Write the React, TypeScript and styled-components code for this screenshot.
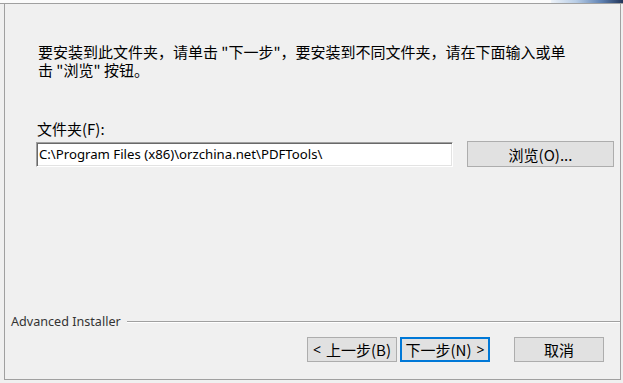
import React from "react";
import styled, { createGlobalStyle } from "styled-components";

const Global = createGlobalStyle`
  html, body { margin: 0; padding: 0; background: #f0f0f0; }
  body { font-family: "Noto Sans CJK SC", sans-serif; }
`;

const CJK = `"Noto Sans CJK SC", "Noto Sans", sans-serif`;
const LATIN = `"Noto Sans", "Noto Sans CJK SC", sans-serif`;

const Window = styled.div`
  width: 623px;
  height: 383px;
  display: flex;
  flex-direction: column;
  background: #f0f0f0;
  color: #000;
  font-family: ${CJK};
  font-size: 15px;
  overflow: hidden;
`;

const Banner = styled.div`
  height: 3px;
  flex: none;
  display: flex;
  justify-content: flex-end;
  background: #fbfbfb;
  border-bottom: 1px solid #a0a0a0;
`;

const BannerArt = styled.div`
  width: 72px;
  height: 3px;
  background: linear-gradient(to right, #eef3f9, #b8cde6 35%, #5f82b3 70%, #223458);
`;

const Body = styled.div`
  flex: 1;
  display: flex;
  flex-direction: column;
  margin: 0 2px 3px 4px;
  border: 1px solid #a0a0a0;
  border-top: none;
`;

const Intro = styled.p`
  margin: 39px 0 0 33px;
  line-height: 18px;
  font-size: 15px;
  white-space: nowrap;
`;

const FieldLabel = styled.div`
  margin: 41px 0 0 32px;
  line-height: 18px;
  font-size: 15px;
`;

const FieldRow = styled.div`
  display: flex;
  align-items: center;
  margin: 3px 0 0 31px;
  gap: 14px;
`;

const PathBox = styled.div`
  width: 413px;
  height: 23px;
  display: flex;
  align-items: center;
  padding-left: 2px;
  background: #fff;
  border: 1px solid;
  border-color: #a0a0a0 #fff #fff #a0a0a0;
  box-shadow: inset 1px 1px 0 #696969, inset -1px -1px 0 #e3e3e3;
  white-space: nowrap;
  font-family: ${LATIN};
  font-size: 13.2px;
`;

const Button = styled.button<{ $w: number; $h?: number; $primary?: boolean }>`
  box-sizing: border-box;
  width: ${(p) => p.$w}px;
  height: ${(p) => p.$h ?? 25}px;
  padding: 0;
  margin: 0;
  background: #e1e1e1;
  border: ${(p) => (p.$primary ? "2px solid #0078d7" : "1px solid #adadad")};
  font-family: ${CJK};
  font-size: 15px;
  color: #000;
  display: flex;
  align-items: center;
  justify-content: center;
  line-height: 1;
  white-space: nowrap;
`;

const Arrow = styled.span<{ $side: "left" | "right" }>`
  font-family: ${LATIN};
  font-size: 14px;
  margin-${(p) => (p.$side === "left" ? "right" : "left")}: 5px;
`;

const Spacer = styled.div`
  flex: 1;
`;

const BrandRow = styled.div`
  display: flex;
  align-items: center;
  gap: 6px;
  padding-left: 6px;
`;

const Brand = styled.span`
  color: #333;
  font-family: ${LATIN};
  font-size: 12.6px;
`;

const Rule = styled.div`
  flex: 1;
  height: 0;
  border-top: 1px solid #a0a0a0;
  border-bottom: 1px solid #ffffff;
`;

const ButtonRow = styled.div`
  display: flex;
  align-items: center;
  margin: 7px 0 17px 302px;
`;

const NavGroup = styled.div`
  display: flex;
  gap: 3px;
  margin-right: 24px;
`;

export default function App() {
  return (
    <>
      <Global />
      <Window>
        <Banner>
          <BannerArt />
        </Banner>
        <Body>
          <Intro>
            要安装到此文件夹，请单击 "下一步"，要安装到不同文件夹，请在下面输入或单
            <br />
            击 "浏览" 按钮。
          </Intro>
          <FieldLabel>文件夹(F):</FieldLabel>
          <FieldRow>
            <PathBox>C:\Program Files (x86)\orzchina.net\PDFTools\</PathBox>
            <Button $w={147} $h={26}>
              浏览(O)...
            </Button>
          </FieldRow>
          <Spacer />
          <BrandRow>
            <Brand>Advanced Installer</Brand>
            <Rule />
          </BrandRow>
          <ButtonRow>
            <NavGroup>
              <Button $w={90}>
                <Arrow $side="left">&lt;</Arrow>上一步(B)
              </Button>
              <Button $w={90} $primary>
                下一步(N)<Arrow $side="right">&gt;</Arrow>
              </Button>
            </NavGroup>
            <Button $w={90}>取消</Button>
          </ButtonRow>
        </Body>
      </Window>
    </>
  );
}
